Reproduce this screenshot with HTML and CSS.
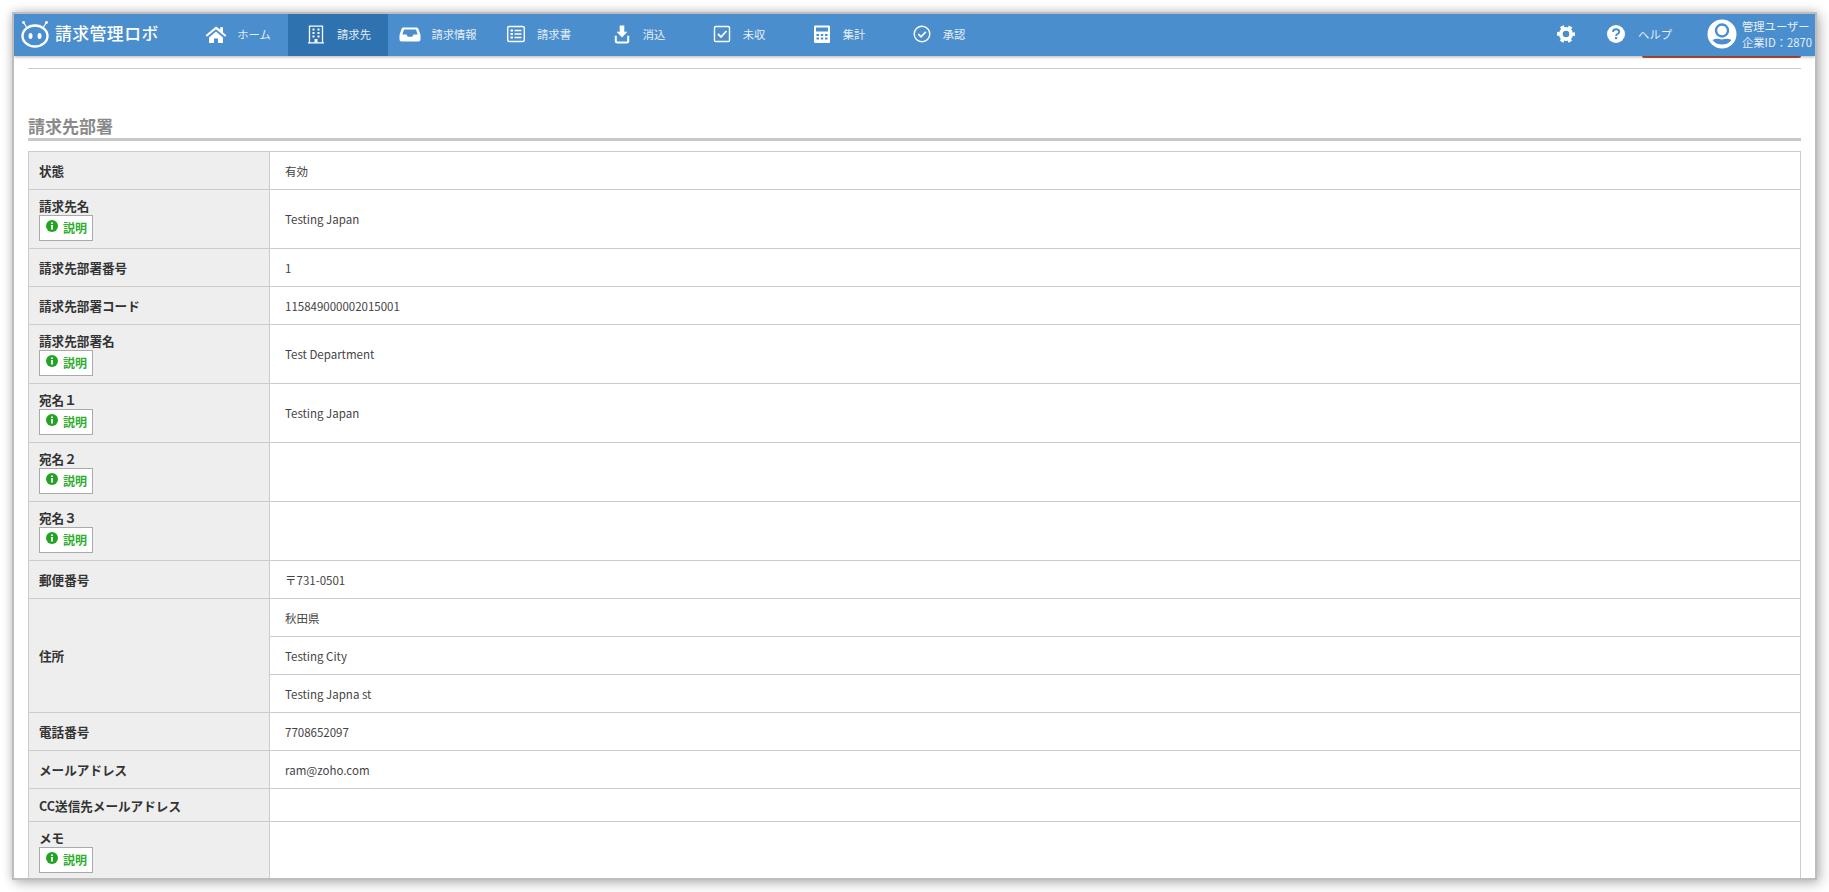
FILE: index.html
```html
<!DOCTYPE html>
<html lang="ja">
<head>
<meta charset="utf-8">
<title>請求先部署</title>
<link rel="stylesheet" href="styles.css">
</head>
<body>
<div class="window">
  <header class="topbar">
    <div class="brand">
      <svg class="robot" viewBox="0 0 30 28" width="30" height="28">
        <circle cx="3.500" cy="2.500" r="1.400" fill="#fff"/><circle cx="26.500" cy="2.500" r="1.400" fill="#fff"/>
        <path d="M4 3l3 5M26 3l-3 5" stroke="#fff" stroke-width="1.200"/>
        <ellipse cx="15" cy="16" rx="12.500" ry="10.500" fill="none" stroke="#fff" stroke-width="2.400"/>
        <ellipse cx="10.500" cy="16" rx="2" ry="3" fill="#fff"/><ellipse cx="19.500" cy="16" rx="2" ry="3" fill="#fff"/>
      </svg>
      <span class="brand-name">請求管理ロボ</span>
    </div>
    <nav class="nav">
      <a class="nav-item">
        <svg class="icon" viewBox="0 0 22 22"><path d="M11 3.500L.6 12.200l1.300 1.500L11 6.200l9.100 7.500 1.300-1.500-3.400-2.800V4.200h-2.800v2.400z" fill="#fff"/><path d="M4 14.500L11 8.600l7 5.900V20h-5v-4.500H9V20H4z" fill="#fff"/></svg>
        <span>ホーム</span>
      </a>
      <a class="nav-item active">
        <svg class="icon" viewBox="0 0 22 22"><path d="M4.500 3.200h13v16.600h-13zM3 19.800h16" fill="none" stroke="#fff" stroke-width="1.300"/><path d="M7.500 5.500h2v2h-2zM12.500 5.500h2v2h-2zM7.500 9h2v2h-2zM12.500 9h2v2h-2zM7.500 12.500h2v2h-2zM12.500 12.500h2v2h-2zM9.500 16h3v3.500h-3z" fill="#fff"/></svg>
        <span>請求先</span>
      </a>
      <a class="nav-item">
        <svg class="icon" viewBox="0 0 22 22"><path d="M4.500 4.500h13c1 0 1.500.5 2 1.500l2 6v4.500c0 1.300-.8 2-2 2H2.500c-1.200 0-2-.7-2-2V12l2-6c.5-1 1-1.500 2-1.500zm.6 2L3.300 11.500h4.200l1.300 2.300h4.400l1.300-2.300h4.200L16.900 6.500z" fill="#fff" fill-rule="evenodd"/></svg>
        <span>請求情報</span>
      </a>
      <a class="nav-item">
        <svg class="icon" viewBox="0 0 22 22"><rect x="2.700" y="3.500" width="16.600" height="15" rx="1.500" fill="none" stroke="#fff" stroke-width="1.400"/><path d="M5.500 6.500h2.500v2H5.500zM5.500 10h2.500v2H5.500zM5.500 13.500h2.500v2H5.500zM9.500 6.800h7v1.400h-7zM9.500 10.300h7v1.400h-7zM9.500 13.800h7v1.400h-7z" fill="#fff"/></svg>
        <span>請求書</span>
      </a>
      <a class="nav-item">
        <svg class="icon" viewBox="0 0 22 22"><path d="M8.700 2.500h4.600v6.300h3.200L11 14.600 5.500 8.800h3.200z" fill="#fff"/><path d="M4.800 12.800v5.200c0 .9.600 1.500 1.500 1.500h9.400c.9 0 1.500-.6 1.500-1.500v-5.200" fill="none" stroke="#fff" stroke-width="2"/></svg>
        <span>消込</span>
      </a>
      <a class="nav-item">
        <svg class="icon" viewBox="0 0 22 22"><rect x="3.500" y="3.500" width="15" height="15" rx="1.300" fill="none" stroke="#fff" stroke-width="1.400"/><path d="M7 11l3 3 5.500-6" fill="none" stroke="#fff" stroke-width="1.800"/></svg>
        <span>未収</span>
      </a>
      <a class="nav-item">
        <svg class="icon" viewBox="0 0 22 22"><path d="M4.500 2.500h13c1 0 1.500.5 1.500 1.500v14.500c0 1-.5 1.500-1.500 1.500h-13c-1 0-1.500-.5-1.500-1.500V4c0-1 .5-1.500 1.500-1.500zM5 4.500v4h12v-4zM5.500 11v2h2.500v-2zm4.300 0v2h2.400v-2zm4.200 0v2h2.500v-2zm-8.500 3.500v2h2.500v-2zm4.300 0v2h2.400v-2zm4.200 0v2h2.500v-2z" fill="#fff" fill-rule="evenodd"/></svg>
        <span>集計</span>
      </a>
      <a class="nav-item">
        <svg class="icon" viewBox="0 0 22 22"><circle cx="11" cy="11" r="7.800" fill="none" stroke="#fff" stroke-width="1.400"/><path d="M7.300 11.200l2.700 2.700 4.800-5" fill="none" stroke="#fff" stroke-width="1.700"/></svg>
        <span>承認</span>
      </a>
    </nav>
    <div class="tools">
      <svg class="gear" viewBox="0 0 22 22" width="22" height="22"><circle cx="11" cy="11" r="5.200" fill="none" stroke="#fff" stroke-width="3.800"/><circle cx="11" cy="11" r="7.700" fill="none" stroke="#fff" stroke-width="2.600" stroke-dasharray="3.800 4.260" stroke-dashoffset="1.900"/></svg>
      <svg class="help-icon" viewBox="0 0 22 22" width="22" height="22"><circle cx="11" cy="11" r="9" fill="#fff"/><path d="M7.900 8.800c.2-1.700 1.500-2.600 3.200-2.600 1.800 0 3.100 1 3.100 2.500 0 2.300-3.100 2.300-3.100 4.200" fill="none" stroke="#4a8ecd" stroke-width="2"/><rect x="10" y="14" width="2.200" height="2.200" fill="#4a8ecd"/></svg>
      <span class="help-label">ヘルプ</span>
      <svg class="avatar" viewBox="0 0 30 30" width="30" height="30"><circle cx="15" cy="15" r="14.500" fill="#fff"/><circle cx="15" cy="11.500" r="6" fill="none" stroke="#4a8ecd" stroke-width="2.400"/><path d="M5.500 21c3-1.600 5.500-1.600 9.500-.6 4 -1 6.500-1 9.500.6-2.300 3-5.700 4.600-9.500 4.600S7.800 24 5.500 21z" fill="#4a8ecd"/></svg>
      <div class="user"><div>管理ユーザー</div><div>企業ID：2870</div></div>
    </div>
  </header>
  <main class="content">
    <div class="top-button"></div>
    <hr class="rule">
    <h2 class="section-title">請求先部署</h2>
    <table class="detail">
      <colgroup><col class="col-label"><col></colgroup>
      <tbody>
        <tr><th>状態</th><td>有効</td></tr>
        <tr class="tall"><th>請求先名<span class="hint"><svg class="hint-icon" viewBox="0 0 12 12"><circle cx="6" cy="6" r="6" fill="#1fa51f"/><path d="M5 2.500h2v1.600H5zM5 5h2v4.500H5z" fill="#fff"/></svg>説明</span></th><td>Testing Japan</td></tr>
        <tr><th>請求先部署番号</th><td>1</td></tr>
        <tr><th>請求先部署コード</th><td>115849000002015001</td></tr>
        <tr class="tall"><th>請求先部署名<span class="hint"><svg class="hint-icon" viewBox="0 0 12 12"><circle cx="6" cy="6" r="6" fill="#1fa51f"/><path d="M5 2.500h2v1.600H5zM5 5h2v4.500H5z" fill="#fff"/></svg>説明</span></th><td>Test Department</td></tr>
        <tr class="tall"><th>宛名１<span class="hint"><svg class="hint-icon" viewBox="0 0 12 12"><circle cx="6" cy="6" r="6" fill="#1fa51f"/><path d="M5 2.500h2v1.600H5zM5 5h2v4.500H5z" fill="#fff"/></svg>説明</span></th><td>Testing Japan</td></tr>
        <tr class="tall"><th>宛名２<span class="hint"><svg class="hint-icon" viewBox="0 0 12 12"><circle cx="6" cy="6" r="6" fill="#1fa51f"/><path d="M5 2.500h2v1.600H5zM5 5h2v4.500H5z" fill="#fff"/></svg>説明</span></th><td></td></tr>
        <tr class="tall"><th>宛名３<span class="hint"><svg class="hint-icon" viewBox="0 0 12 12"><circle cx="6" cy="6" r="6" fill="#1fa51f"/><path d="M5 2.500h2v1.600H5zM5 5h2v4.500H5z" fill="#fff"/></svg>説明</span></th><td></td></tr>
        <tr><th>郵便番号</th><td>〒731-0501</td></tr>
        <tr><th rowspan="3">住所</th><td>秋田県</td></tr>
        <tr><td>Testing City</td></tr>
        <tr><td>Testing Japna st</td></tr>
        <tr><th>電話番号</th><td>7708652097</td></tr>
        <tr><th>メールアドレス</th><td>ram@zoho.com</td></tr>
        <tr class="short"><th>CC送信先メールアドレス</th><td></td></tr>
        <tr class="tall"><th>メモ<span class="hint"><svg class="hint-icon" viewBox="0 0 12 12"><circle cx="6" cy="6" r="6" fill="#1fa51f"/><path d="M5 2.500h2v1.600H5zM5 5h2v4.500H5z" fill="#fff"/></svg>説明</span></th><td></td></tr>
      </tbody>
    </table>
  </main>
</div>
</body>
</html>
```
FILE: styles.css
```css
* { box-sizing: border-box; }
html, body { margin: 0; height: 892px; overflow: hidden; background: #fff; }
body {
  padding: 12px;
  font-family: "Noto Sans CJK JP", "Noto Sans", sans-serif;
  font-size: 11.5px;
  color: #444;
}
.window {
  width: 1805px;
  height: 868px;
  border: 2px solid #bdbdbd;
  background: #fff;
  box-shadow: 3px 3px 12px rgba(0, 0, 0, .28), -1px -1px 8px rgba(0, 0, 0, .12);
  overflow: hidden;
  position: relative;
}
.topbar {
  height: 42px;
  background: #4a8ecd;
  display: flex;
  font-size: 11.3px;
  color: #e6eff8;
  position: relative;
  z-index: 2;
  box-shadow: 0 1px 3px rgba(0, 0, 0, .3);
}
.brand {
  width: 174px;
  display: flex;
  align-items: center;
  padding: 0 0 4px 6px;
  gap: 5px;
  color: #fff;
}
.brand-name { font-size: 16.8px; font-weight: 500; letter-spacing: .5px; white-space: nowrap; line-height: 1; }
.robot { flex: none; margin-top: 1px; }
.nav { display: flex; }
.nav-item {
  width: 100px;
  display: flex;
  align-items: center;
  justify-content: center;
  gap: 10px;
  padding-bottom: 3px;
  white-space: nowrap;
}
.nav-item.active { background: #2f72b0; }
.icon { width: 22px; height: 22px; flex: none; }
.tools {
  margin-left: auto;
  display: flex;
  align-items: center;
  padding-bottom: 3px;
}
.gear { margin-right: 28px; }
.help-icon { margin-right: 11px; }
.help-label { margin-right: 35px; }
.avatar { margin-right: 5px; }
.user { line-height: 16px; width: 73px; white-space: nowrap; }
.content { padding: 12px 14px 0; position: relative; }
.top-button {
  position: absolute;
  right: 14px;
  top: 0;
  width: 159px;
  height: 2px;
  background: #b5523b;
  border-radius: 0 0 3px 3px;
}
.rule { border: 0; border-top: 1px solid #ccc; margin: 0; }
.section-title {
  margin: 44px 0 0;
  height: 28px;
  border-bottom: 3px solid #c8c8c8;
  font-size: 17px;
  line-height: 25px;
  font-weight: 700;
  color: #8a8a8a;
}
.detail {
  width: 100%;
  margin-top: 10px;
  border-collapse: collapse;
  table-layout: fixed;
  border: 1px solid #ccc;
}
.col-label { width: 241px; }
.detail th, .detail td {
  border: 1px solid #ccc;
  height: 38px;
  padding: 0;
  vertical-align: middle;
}
.detail th {
  background: #eee;
  padding-left: 10px;
  text-align: left;
  font-size: 12.6px;
  font-weight: 700;
  color: #333;
}
.detail td { padding-left: 15px; }
.detail .tall th, .detail .tall td { height: 59px; }
.detail .tall th { line-height: 18px; }
.detail .short th, .detail .short td { height: 33px; }
.hint {
  display: flex;
  align-items: center;
  gap: 5px;
  width: 54px;
  height: 26px;
  margin-bottom: 1px;
  padding-left: 6px;
  background: #fff;
  border: 1px solid #aaa;
  color: #2fae2f;
  font-size: 12px;
  font-weight: 700;
}
.hint-icon { width: 12px; height: 12px; flex: none; margin-top: -3px; }
```
